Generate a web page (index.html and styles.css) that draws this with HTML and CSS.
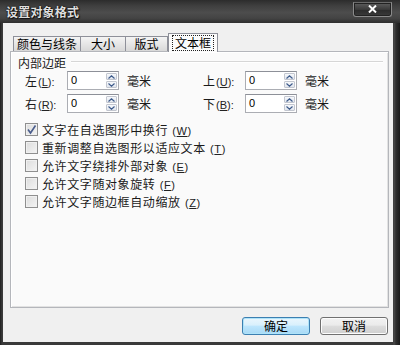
FILE: index.html
```html
<!DOCTYPE html>
<html lang="zh-CN">
<head>
<meta charset="utf-8">
<title>设置对象格式</title>
<link rel="stylesheet" href="styles.css">
</head>
<body>
<div class="window">
  <div class="titlebar">
    <span class="title">设置对象格式</span>
    <div class="close">
      <svg width="9" height="8" viewBox="0 0 9 8"><path d="M1 0.5 L8 7.5 M8 0.5 L1 7.5" stroke="#ffffff" stroke-width="2"/></svg>
    </div>
  </div>
  <div class="client">
    <div class="tabs">
      <div class="tab t1">颜色与线条</div>
      <div class="tab t2">大小</div>
      <div class="tab t3">版式</div>
      <div class="tab sel"><span class="focus">文本框</span></div>
    </div>
    <div class="panel">
      <div class="group"><span class="glabel">内部边距</span><span class="rule"></span></div>
      <div class="fields">
        <div class="frow">
          <div class="field">
            <span class="lab">左<span class="key">(<u>L</u>):</span></span>
            <div class="spin"><span class="val">0</span><span class="arrows"><span class="up"><svg width="7" height="4" viewBox="0 0 7 4"><path d="M0.5 3.5 L3.5 0.8 L6.5 3.5" fill="none" stroke="#3d5a8a" stroke-width="1.2"/></svg></span><span class="dn"><svg width="7" height="4" viewBox="0 0 7 4"><path d="M0.5 0.5 L3.5 3.2 L6.5 0.5" fill="none" stroke="#3d5a8a" stroke-width="1.2"/></svg></span></span></div>
            <span class="unit">毫米</span>
          </div>
          <div class="field">
            <span class="lab">上<span class="key">(<u>U</u>):</span></span>
            <div class="spin"><span class="val">0</span><span class="arrows"><span class="up"><svg width="7" height="4" viewBox="0 0 7 4"><path d="M0.5 3.5 L3.5 0.8 L6.5 3.5" fill="none" stroke="#3d5a8a" stroke-width="1.2"/></svg></span><span class="dn"><svg width="7" height="4" viewBox="0 0 7 4"><path d="M0.5 0.5 L3.5 3.2 L6.5 0.5" fill="none" stroke="#3d5a8a" stroke-width="1.2"/></svg></span></span></div>
            <span class="unit">毫米</span>
          </div>
        </div>
        <div class="frow">
          <div class="field">
            <span class="lab">右<span class="key">(<u>R</u>):</span></span>
            <div class="spin"><span class="val">0</span><span class="arrows"><span class="up"><svg width="7" height="4" viewBox="0 0 7 4"><path d="M0.5 3.5 L3.5 0.8 L6.5 3.5" fill="none" stroke="#3d5a8a" stroke-width="1.2"/></svg></span><span class="dn"><svg width="7" height="4" viewBox="0 0 7 4"><path d="M0.5 0.5 L3.5 3.2 L6.5 0.5" fill="none" stroke="#3d5a8a" stroke-width="1.2"/></svg></span></span></div>
            <span class="unit">毫米</span>
          </div>
          <div class="field">
            <span class="lab">下<span class="key">(<u>B</u>):</span></span>
            <div class="spin"><span class="val">0</span><span class="arrows"><span class="up"><svg width="7" height="4" viewBox="0 0 7 4"><path d="M0.5 3.5 L3.5 0.8 L6.5 3.5" fill="none" stroke="#3d5a8a" stroke-width="1.2"/></svg></span><span class="dn"><svg width="7" height="4" viewBox="0 0 7 4"><path d="M0.5 0.5 L3.5 3.2 L6.5 0.5" fill="none" stroke="#3d5a8a" stroke-width="1.2"/></svg></span></span></div>
            <span class="unit">毫米</span>
          </div>
        </div>
      </div>
      <div class="checks">
        <div class="crow"><span class="box"><svg width="11" height="11" viewBox="0 0 11 11"><path d="M2 5.5 L4.5 9 L9.5 1.5" fill="none" stroke="#4a5d8c" stroke-width="1.6"/></svg></span><span class="ctext">文字在自选图形中换行 <span class="key">(<u>W</u>)</span></span></div>
        <div class="crow"><span class="box"></span><span class="ctext">重新调整自选图形以适应文本 <span class="key">(<u>T</u>)</span></span></div>
        <div class="crow"><span class="box"></span><span class="ctext">允许文字绕排外部对象 <span class="key">(<u>E</u>)</span></span></div>
        <div class="crow"><span class="box"></span><span class="ctext">允许文字随对象旋转 <span class="key">(<u>F</u>)</span></span></div>
        <div class="crow"><span class="box"></span><span class="ctext">允许文字随边框自动缩放 <span class="key">(<u>Z</u>)</span></span></div>
      </div>
    </div>
    <div class="buttons">
      <div class="btn default">确定</div>
      <div class="btn">取消</div>
    </div>
  </div>
</div>
</body>
</html>
```

FILE: styles.css
```css
html, body {
  margin: 0;
  padding: 0;
  background: #2b2b2b;
}
* {
  box-sizing: border-box;
}
body {
  width: 400px;
  height: 345px;
  overflow: hidden;
  font-family: "Noto Sans CJK SC", "Noto Sans", sans-serif;
  font-size: 12px;
  color: #000;
}
.window {
  width: 400px;
  height: 345px;
  display: flex;
  flex-direction: column;
  background: linear-gradient(to right, #1e1e1e 0px, #3a3a3a 2px, #3a3a3a 393px, #4a4a4a 394px, #2e2e2e 396px, #1a1a1a 400px);
}
.titlebar {
  height: 23px;
  flex: none;
  display: flex;
  align-items: center;
  justify-content: space-between;
  padding: 0 8px 0 6px;
  background: linear-gradient(to bottom, #2c2c2c 0%, #3f3f3f 25%, #4d4d4d 55%, #434343 80%, #2e2e2e 100%);
}
.title {
  font-weight: bold;
  font-size: 12px;
  color: #dedede;
  letter-spacing: 0.2px;
  text-shadow: 0 0 2px #000, 1px 1px 1px #111;
  line-height: 14px;
  margin-top: 1px;
}
.close {
  width: 39px;
  height: 15px;
  margin-top: -5px;
  border: 1px solid #8a8a8a;
  border-top-color: #6a6a6a;
  border-radius: 0 0 3px 3px;
  background: linear-gradient(to bottom, #5e5e5e, #3a3a3a 50%, #2c2c2c 55%, #3a3a3a);
  box-shadow: inset 0 0 0 1px #222;
  display: flex;
  align-items: center;
  justify-content: center;
}
.client {
  flex: 1;
  margin: 0 7px 3px 3px;
  background: #f0f0f0;
  display: flex;
  flex-direction: column;
  padding-top: 10px;
}
.tabs {
  display: flex;
  align-items: flex-start;
  padding-left: 10px;
  height: 18px;
  position: relative;
  z-index: 2;
}
.tab {
  height: 15px;
  margin-top: 3px;
  border: 1px solid #8e9099;
  border-bottom: none;
  background: linear-gradient(to bottom, #f4f4f4, #e6e6e6 50%, #d8d8d8);
  display: flex;
  align-items: center;
  justify-content: center;
  line-height: 14px;
  margin-right: -1px;
}
.t1 { width: 68px; }
.t2 { width: 46px; }
.t3 { width: 43px; }
.tab.sel {
  width: 50px;
  height: 19px;
  margin-top: 0;
  margin-left: 1px;
  background: #fbfbfb;
  border-color: #8e9099;
}
.focus {
  outline: 1px dotted #222;
  outline-offset: 0;
  padding: 0 2px;
  line-height: 14px;
  margin-top: -1px;
}
.panel {
  height: 257px;
  flex: none;
  margin: 0 4px 0 7px;
  border: 1px solid #b4b6bb;
  background: #fafafa;
  box-shadow: inset 1px 1px 0 #ffffff, inset -1px -1px 0 #e2e2e2;
  padding: 4px 5px 0 7px;
}
.group {
  display: flex;
  align-items: center;
  height: 14px;
}
.glabel {
  line-height: 14px;
  color: #1a1a1a;
}
.rule {
  flex: 1;
  margin-left: 5px;
  margin-top: -2px;
  border-top: 1px solid #d6d6d6;
  border-bottom: 1px solid #ffffff;
}
.fields {
  padding-left: 7px;
  margin-top: 1px;
  display: flex;
  flex-direction: column;
  gap: 4px;
}
.frow {
  display: flex;
  height: 19px;
}
.field {
  width: 178px;
  display: flex;
  align-items: center;
}
.lab {
  width: 42px;
  flex: none;
  color: #1a1a1a;
}
.key {
  font-family: "Liberation Sans", "Noto Sans CJK SC", sans-serif;
  font-size: 11px;
  margin-left: 1px;
  color: #222;
}
.spin {
  width: 52px;
  height: 19px;
  border: 1px solid #abadb3;
  border-top-color: #8d9098;
  background: #ffffff;
  display: flex;
  align-items: stretch;
  justify-content: space-between;
}
.val {
  font-family: "Liberation Sans", sans-serif;
  font-size: 11px;
  line-height: 17px;
  padding-left: 3px;
}
.arrows {
  width: 11px;
  display: flex;
  flex-direction: column;
  margin: 1px 1px 1px 0;
  gap: 1px;
}
.up, .dn {
  flex: 1;
  border: 1px solid #c2c6cf;
  border-radius: 1px;
  background: linear-gradient(to bottom, #f6f8fb, #e1e6ee);
  display: flex;
  align-items: center;
  justify-content: center;
}
.unit {
  margin-left: 8px;
  color: #1a1a1a;
}
.checks {
  margin-top: 7px;
  padding-left: 7px;
  display: flex;
  flex-direction: column;
}
.crow {
  height: 18px;
  display: flex;
  align-items: center;
}
.box {
  width: 13px;
  height: 13px;
  border: 1px solid #8f8f8f;
  background: linear-gradient(135deg, #dcdcdc, #f4f4f4);
  box-shadow: inset 0 0 0 1px #f0f0f0;
  display: flex;
  align-items: center;
  justify-content: center;
  flex: none;
}
.ctext {
  margin-left: 4px;
  color: #1a1a1a;
  letter-spacing: 0.6px;
}
.buttons {
  margin-top: 9px;
  display: flex;
  justify-content: flex-end;
  gap: 10px;
  padding-right: 5px;
}
.btn {
  width: 68px;
  height: 18px;
  border: 1px solid #707070;
  border-radius: 3px;
  background: linear-gradient(to bottom, #f2f2f2 0%, #ebebeb 45%, #dddddd 50%, #cfcfcf 100%);
  box-shadow: inset 0 0 0 1px #fcfcfc;
  display: flex;
  align-items: center;
  justify-content: center;
  line-height: 14px;
}
.btn.default {
  border-color: #3c7fb1;
  background: linear-gradient(to bottom, #eaf6fd 0%, #d9f0fc 45%, #bee6fd 50%, #a7d9f5 100%);
  box-shadow: inset 0 0 0 1px #aee3f9;
}
```
